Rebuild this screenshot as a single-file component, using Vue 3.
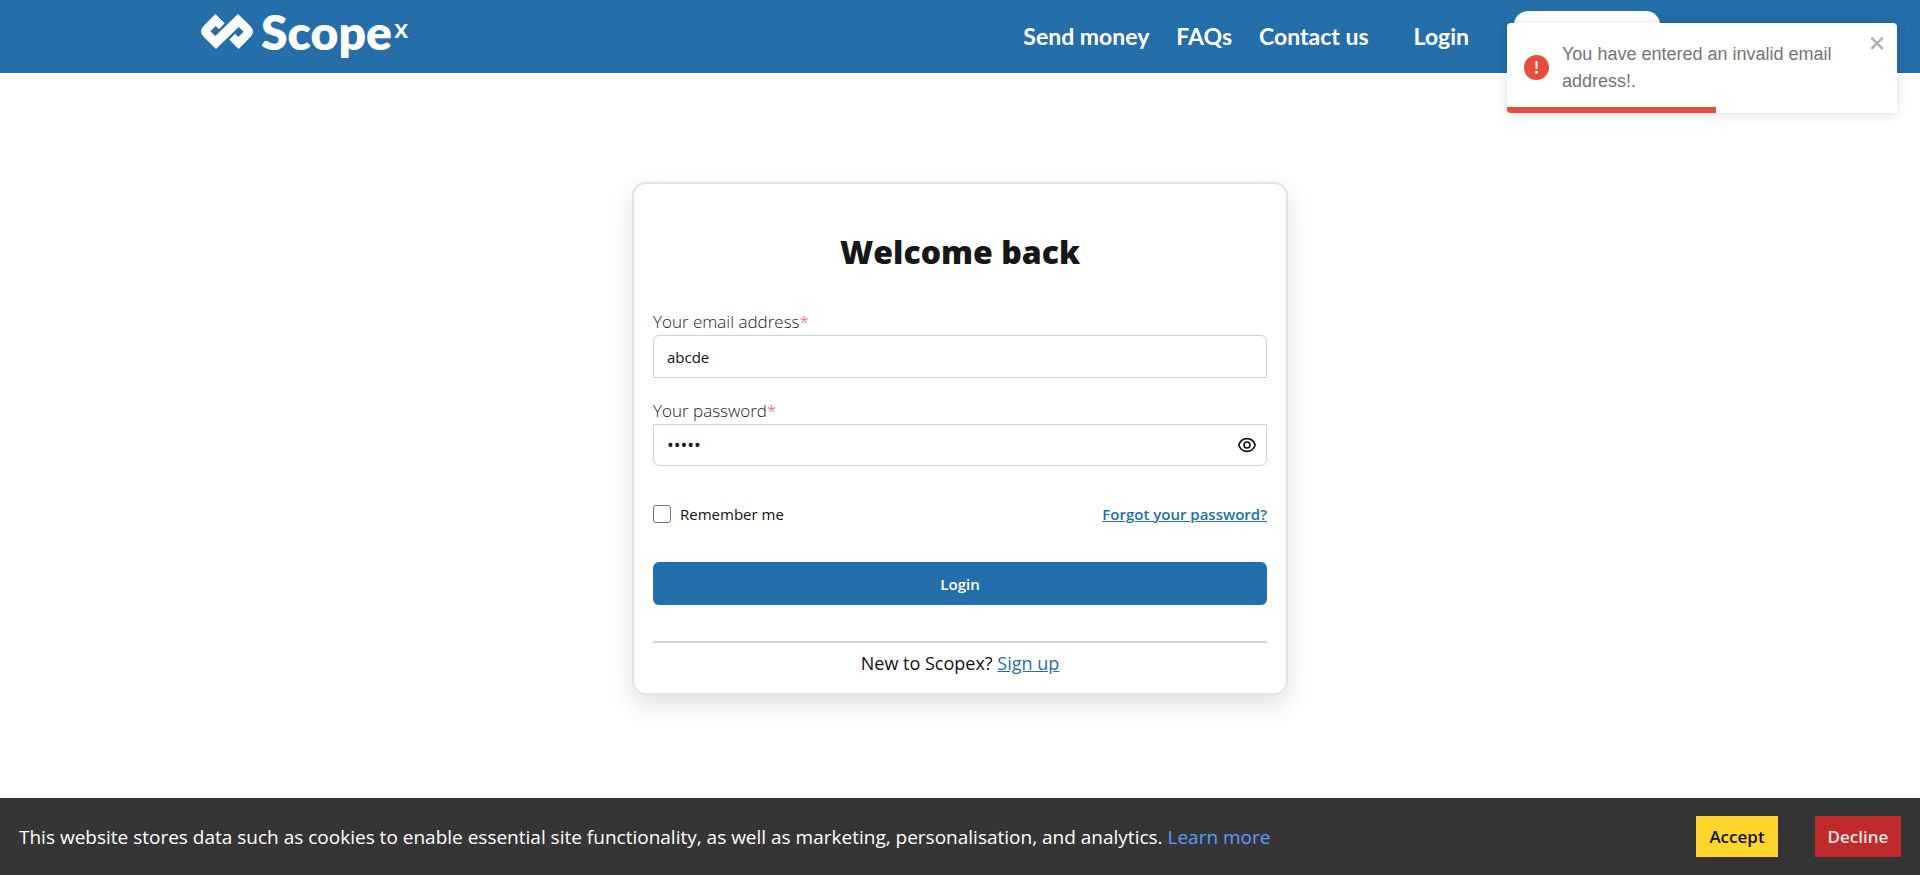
<script setup>
import { ref } from 'vue'

const email = ref('abcde')
const password = ref('abcde')
const remember = ref(false)
const showPassword = ref(false)
const toastProgress = ref(53.7)
</script>

<template>
  <div class="page">
    <header class="header">
      <a href="#" class="logo" aria-label="Scopex">
        <svg class="logo-mark" viewBox="63 43 156 105" aria-hidden="true">
          <path fill="#fff" d="M106 43 L134 71 L117 89 L107 79 L91 95 L106 109 L174 43 L210 78 Q219 87 219 95.5 Q219 104 211 112 L176 148 L148 120 L165 102 L175 112 L191 96 L176 82 L108 148 L72 113 Q63 104 63 95.5 Q63 87 71 79 Z" />
        </svg>
        <span class="logo-word">Scope</span><span class="logo-x">x</span>
      </a>
      <nav class="nav">
        <a href="#">Send money</a>
        <a href="#">FAQs</a>
        <a href="#">Contact us</a>
        <a href="#" class="nav-login">Login</a>
        <a href="#" class="nav-signup" aria-label="Sign up"></a>
      </nav>
    </header>

    <main class="main">
      <form class="card" @submit.prevent>
        <h1>Welcome back</h1>
        <label class="label" for="email">Your email address<span class="required">*</span></label>
        <input id="email" v-model="email" class="field field-top" type="text" />
        <label class="label" for="password">Your password<span class="required">*</span></label>
        <div class="field-wrap">
          <input id="password" v-model="password" class="field field-bottom" :type="showPassword ? 'text' : 'password'" />
          <button class="eye" type="button" aria-label="Show password" @click="showPassword = !showPassword">
            <svg viewBox="0 0 20 18" width="20" height="18" fill="none" stroke="#111" stroke-width="1.6">
              <path d="M1.8 9 C3.2 4.8 6.3 2.6 10 2.6 S16.8 4.8 18.2 9 C16.8 13.2 13.7 15.4 10 15.4 S3.2 13.2 1.8 9 Z" />
              <circle cx="10" cy="9" r="3" />
            </svg>
          </button>
        </div>
        <div class="options">
          <label class="remember"><input v-model="remember" type="checkbox" />Remember me</label>
          <a href="#" class="forgot">Forgot your password?</a>
        </div>
        <button class="submit" type="submit">Login</button>
        <hr />
        <p class="signup">New to Scopex? <a href="#">Sign up</a></p>
      </form>
    </main>

    <footer class="cookies">
      <p>This website stores data such as cookies to enable essential site functionality, as well as marketing, personalisation, and analytics. <a href="#">Learn more</a></p>
      <button type="button" class="accept">Accept</button>
      <button type="button" class="decline">Decline</button>
    </footer>

    <div class="toast" role="alert">
      <svg class="toast-icon" viewBox="0 0 24 24" aria-hidden="true">
        <path fill="#e74c3c" d="M11.983 0a12.206 12.206 0 00-8.51 3.653A11.8 11.8 0 000 12.207 11.779 11.779 0 0011.8 24h.214A12.111 12.111 0 0024 11.791 11.766 11.766 0 0011.983 0zM10.5 16.542a1.476 1.476 0 011.449-1.53h.027a1.527 1.527 0 011.523 1.47 1.475 1.475 0 01-1.449 1.53h-.027a1.529 1.529 0 01-1.523-1.47zM11 12.5v-6a1 1 0 012 0v6a1 1 0 11-2 0z" />
      </svg>
      <p>You have entered an invalid email address!.</p>
      <button type="button" class="toast-close" aria-label="Close">
        <svg viewBox="0 0 14 16" width="18" height="20" aria-hidden="true">
          <path fill="#b3b3b3" fill-rule="evenodd" d="M7.71 8.23l3.75 3.75-1.48 1.48-3.75-3.75-3.75 3.75L1 11.98l3.75-3.75L1 4.48 2.48 3l3.75 3.75L9.98 3l1.48 1.48-3.75 3.75z" />
        </svg>
      </button>
      <div class="toast-bar" :style="{ width: toastProgress + '%' }"></div>
    </div>
  </div>
</template>

<style>
body {
  margin: 0;
}
</style>

<style scoped>
.page,
.page * {
  box-sizing: border-box;
}
.page {
  min-height: 100vh;
  display: flex;
  flex-direction: column;
  background: #fff;
  color: #111;
  font-family: "Open Sans", "Noto Sans", sans-serif;
}
button,
input {
  font: inherit;
}
.header {
  height: 73px;
  padding: 0 260px 0 201px;
  display: flex;
  align-items: flex-start;
  justify-content: space-between;
  background: #246eaa;
}
.logo {
  display: flex;
  align-items: flex-start;
  padding-top: 5px;
  color: #fff;
  text-decoration: none;
  font-family: Lato, sans-serif;
  font-weight: 700;
}
.logo-mark {
  width: 52px;
  height: 35px;
  margin: 9px 8px 0 0;
}
.logo-word {
  font-size: 48px;
  font-weight: 800;
  line-height: 54px;
}
.logo-x {
  margin-left: 2px;
  font-family: "Open Sans", sans-serif;
  font-size: 26px;
  font-weight: 600;
  line-height: 46px;
}
.nav {
  display: flex;
  align-items: flex-start;
  padding-top: 11px;
  gap: 27px;
  font-family: Lato, sans-serif;
  font-size: 23px;
  line-height: 50px;
  font-weight: 700;
}
.nav a {
  color: #fff;
  text-decoration: none;
  white-space: nowrap;
}
.nav .nav-login {
  margin: 0 18px;
}
.nav .nav-signup {
  width: 146px;
  height: 50px;
  border-radius: 14px;
  background: #fff;
}
.main {
  flex: 1;
  display: flex;
  justify-content: center;
  align-items: flex-start;
  padding-top: 109px;
}
.card {
  width: 656px;
  display: flex;
  flex-direction: column;
  padding: 45px 19px 18px;
  border: 2px solid #e4e4e4;
  border-radius: 14px;
  box-shadow: 0 10px 24px rgba(0, 0, 0, 0.12);
}
h1 {
  margin: 0 0 34px;
  text-align: center;
  font-size: 32px;
  line-height: 46px;
  font-weight: 800;
  color: #171717;
}
.label {
  font-size: 17px;
  line-height: 26px;
  font-weight: 300;
  color: #222;
}
.required {
  color: #f44;
}
.field {
  display: block;
  width: 100%;
  height: 43px;
  padding: 0 13px;
  border: 1px solid #d1d1d1;
  background: #fff;
  color: #111;
  font-size: 15px;
  outline: none;
}
.field-top {
  border-radius: 6px 6px 0 0;
  margin-bottom: 20px;
}
.field-bottom {
  height: 42px;
  border-radius: 0 0 6px 6px;
}
.field-bottom[type="password"] {
  font-size: 18px;
}
.field-wrap {
  position: relative;
  margin-bottom: 36px;
}
.eye {
  position: absolute;
  right: 10px;
  top: 0;
  bottom: 0;
  display: flex;
  align-items: center;
  padding: 0;
  border: 0;
  background: none;
}
.options {
  display: flex;
  justify-content: space-between;
  align-items: center;
  font-size: 15px;
  line-height: 24px;
  margin-bottom: 36px;
}
.remember {
  display: flex;
  align-items: center;
  gap: 9px;
}
.remember input {
  appearance: none;
  width: 18px;
  height: 18px;
  margin: 0;
  border: 1px solid #767676;
  border-radius: 3px;
  background: #fff;
}
.forgot {
  color: #246eaa;
  font-weight: 600;
}
.submit {
  height: 43px;
  border: 0;
  border-radius: 6px;
  background: #246eaa;
  color: #fff;
  font-size: 15px;
  font-weight: 600;
}
hr {
  width: 100%;
  height: 2px;
  margin: 36px 0 8px;
  border: 0;
  background: #d3d3d3;
}
.signup {
  margin: 0;
  text-align: center;
  font-size: 18px;
  line-height: 24px;
}
.signup a {
  color: #246eaa;
}
.cookies {
  display: flex;
  align-items: center;
  padding: 18px 19px;
  background: #353535;
  color: #fff;
  font-size: 19px;
}
.cookies p {
  flex: 1;
  margin: 0;
}
.cookies a {
  color: #5c9dff;
  text-decoration: none;
}
.cookies button {
  height: 41px;
  padding: 0;
  border: 0;
  font-size: 17px;
  font-weight: 600;
}
.cookies .accept {
  width: 82px;
  margin-right: 37px;
  background: #ffd42d;
  color: #111;
}
.cookies .decline {
  width: 86px;
  background: #c12a2a;
  color: #e5e5e5;
}
.toast {
  position: absolute;
  top: 23px;
  right: 23px;
  width: 390px;
  height: 90px;
  display: flex;
  align-items: center;
  padding: 0 17px 1px;
  border-radius: 4px;
  background: #fff;
  overflow: hidden;
  box-shadow: 0 1px 10px rgba(0, 0, 0, 0.1), 0 2px 15px rgba(0, 0, 0, 0.05);
}
.toast-icon {
  width: 25px;
  height: 25px;
  margin-right: 13px;
}
.toast p {
  flex: 1;
  margin: 0 32px 0 0;
  color: #757575;
  font-family: "Liberation Sans", Arial, sans-serif;
  font-size: 18px;
  line-height: 27px;
}
.toast-close {
  position: absolute;
  top: 10px;
  right: 10px;
  padding: 0;
  border: 0;
  background: none;
}
.toast-close svg {
  display: block;
}
.toast-bar {
  position: absolute;
  left: 0;
  bottom: 0;
  height: 6px;
  background: #e74c3c;
}
</style>
